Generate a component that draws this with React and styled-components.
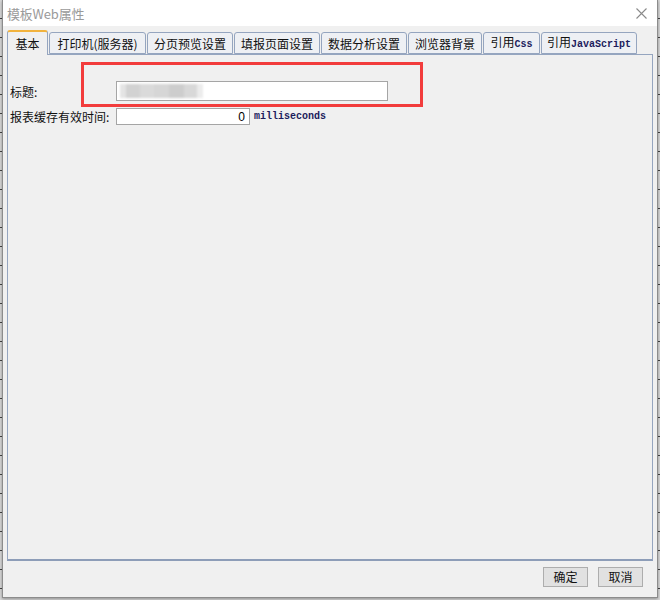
import styled, { createGlobalStyle } from "styled-components";

const GlobalStyle = createGlobalStyle`
  html, body {
    margin: 0;
    padding: 0;
  }
  body {
    width: 660px;
    height: 600px;
    overflow: hidden;
    font-family: "Noto Sans CJK SC", "Noto Sans", sans-serif;
    background-color: #d8d8d8;
    background-image: repeating-linear-gradient(
      to bottom,
      transparent 0,
      transparent 18px,
      #444 18px,
      #444 19px
    );
  }
`;

const Dialog = styled.div`
  box-sizing: border-box;
  margin-left: 2px;
  width: 656px;
  height: 598px;
  display: flex;
  flex-direction: column;
  background: #f0f0f0;
  border: 1px solid #8c8c8c;
  border-top: none;
  box-shadow: 0 1px 3px rgba(0, 0, 0, 0.35);
`;

const TitleBar = styled.div`
  height: 26px;
  flex: none;
  display: flex;
  align-items: center;
  justify-content: space-between;
  padding: 0 10px 0 4px;
  background: #ffffff;
`;

const Title = styled.span`
  font-size: 13px;
  color: #9a9a9a;
  font-family: "Noto Sans CJK SC", "DejaVu Sans", sans-serif;
  letter-spacing: -0.2px;
`;

const Body = styled.div`
  flex: 1;
  display: flex;
  flex-direction: column;
  padding: 4px 4px 0 4px;
  min-height: 0;
`;

const TabRow = styled.div`
  height: 24px;
  flex: none;
  display: flex;
  align-items: flex-end;
  gap: 1px;
  position: relative;
  z-index: 1;
`;

const Tab = styled.div`
  box-sizing: border-box;
  width: ${(p) => p.$w}px;
  height: ${(p) => (p.$active ? 25 : 22)}px;
  margin-bottom: ${(p) => (p.$active ? -1 : 0)}px;
  display: flex;
  align-items: center;
  justify-content: center;
  font-size: 12px;
  color: #111;
  white-space: nowrap;
  border: 1px solid #95a5bf;
  border-bottom: ${(p) => (p.$active ? "none" : "1px solid #95a5bf")};
  border-top: ${(p) => (p.$active ? "2px solid #f2b33d" : "1px solid #95a5bf")};
  border-radius: 3px 3px 0 0;
  background: ${(p) => (p.$active ? "#f0f0f0" : "#eef0f4")};
  padding-top: ${(p) => (p.$active ? 0 : 1)}px;
`;

const TabText = styled.span`
  line-height: 16px;
`;

const Code = styled.span`
  font-family: "Liberation Mono", "DejaVu Sans Mono", monospace;
  font-size: 10px;
  font-weight: bold;
  color: #1c1c5c;
  letter-spacing: 0;
`;

const Panel = styled.div`
  flex: 1;
  position: relative;
  box-sizing: border-box;
  border: 1px solid #95a5bf;
  border-bottom: 2px solid #8d9db8;
  background: #f0f0f0;
  padding: 26px 0 0 2px;
  display: flex;
  flex-direction: column;
  gap: 7px;
`;

const FormRow = styled.div`
  display: flex;
  align-items: center;
`;

const Label = styled.span`
  width: 106px;
  flex: none;
  font-size: 12px;
  color: #111;
  white-space: nowrap;
`;

const Field = styled.div`
  box-sizing: border-box;
  width: ${(p) => p.$w}px;
  height: ${(p) => p.$h}px;
  background: #ffffff;
  border: 1px solid #a5a5a5;
  display: flex;
  align-items: center;
  justify-content: ${(p) => (p.$right ? "flex-end" : "flex-start")};
  padding: 0 4px 0 3px;
  font-size: 12px;
  font-family: "Liberation Sans", Arial, sans-serif;
  color: #000;
  overflow: hidden;
`;

const Blurred = styled.div`
  display: flex;
  height: 14px;
  filter: blur(1.2px);
`;

const BlurBlock = styled.div`
  width: ${(p) => p.$w}px;
  height: 100%;
  background: ${(p) => p.$c};
`;

const Unit = styled(Code)`
  margin-left: 4px;
`;

const Highlight = styled.div`
  position: absolute;
  left: 73px;
  top: 7px;
  width: 342px;
  height: 45px;
  box-sizing: border-box;
  border: 3px solid #f23c3c;
  pointer-events: none;
`;

const Footer = styled.div`
  height: 30px;
  flex: none;
  display: flex;
  justify-content: flex-end;
  align-items: flex-start;
  gap: 10px;
  padding: 6px 10px 0 0;
`;

const Button = styled.button`
  box-sizing: border-box;
  width: 45px;
  height: 20px;
  padding: 0;
  background: #e1e1e1;
  border: 1px solid #adadad;
  font-family: "Noto Sans CJK SC", sans-serif;
  font-size: 12px;
  color: #111;
  line-height: 18px;
`;

const tabs = [
  { w: 41, label: "基本", active: true },
  { w: 97, label: "打印机(服务器)" },
  { w: 86, label: "分页预览设置" },
  { w: 86, label: "填报页面设置" },
  { w: 86, label: "数据分析设置" },
  { w: 74, label: "浏览器背景" },
  { w: 57, label: "引用", code: "Css" },
  { w: 96, label: "引用", code: "JavaScript" },
];

const blur = [
  { w: 6, c: "#e4e4e4" },
  { w: 14, c: "#d2d2d2" },
  { w: 14, c: "#dadada" },
  { w: 15, c: "#d6d6d6" },
  { w: 15, c: "#cdcdcd" },
  { w: 13, c: "#d8d8d8" },
  { w: 6, c: "#ececec" },
];

const CloseIcon = () => (
  <svg width="11" height="11" viewBox="0 0 11 11">
    <path d="M0.5 0.5 L10.5 10.5 M10.5 0.5 L0.5 10.5" stroke="#8a8a8a" strokeWidth="1.1" />
  </svg>
);

const App = () => (
  <>
    <GlobalStyle />
    <Dialog>
      <TitleBar>
        <Title>模板Web属性</Title>
        <CloseIcon />
      </TitleBar>
      <Body>
        <TabRow>
          {tabs.map((t) => (
            <Tab key={t.label + (t.code || "")} $w={t.w} $active={t.active}>
              <TabText>
                {t.label}
                {t.code && <Code>{t.code}</Code>}
              </TabText>
            </Tab>
          ))}
        </TabRow>
        <Panel>
          <FormRow>
            <Label>标题:</Label>
            <Field $w={272} $h={20}>
              <Blurred>
                {blur.map((b, i) => (
                  <BlurBlock key={i} $w={b.w} $c={b.c} />
                ))}
              </Blurred>
            </Field>
          </FormRow>
          <FormRow>
            <Label>报表缓存有效时间:</Label>
            <Field $w={134} $h={17} $right>
              0
            </Field>
            <Unit>milliseconds</Unit>
          </FormRow>
          <Highlight />
        </Panel>
        <Footer>
          <Button>确定</Button>
          <Button>取消</Button>
        </Footer>
      </Body>
    </Dialog>
  </>
);

export default App;
